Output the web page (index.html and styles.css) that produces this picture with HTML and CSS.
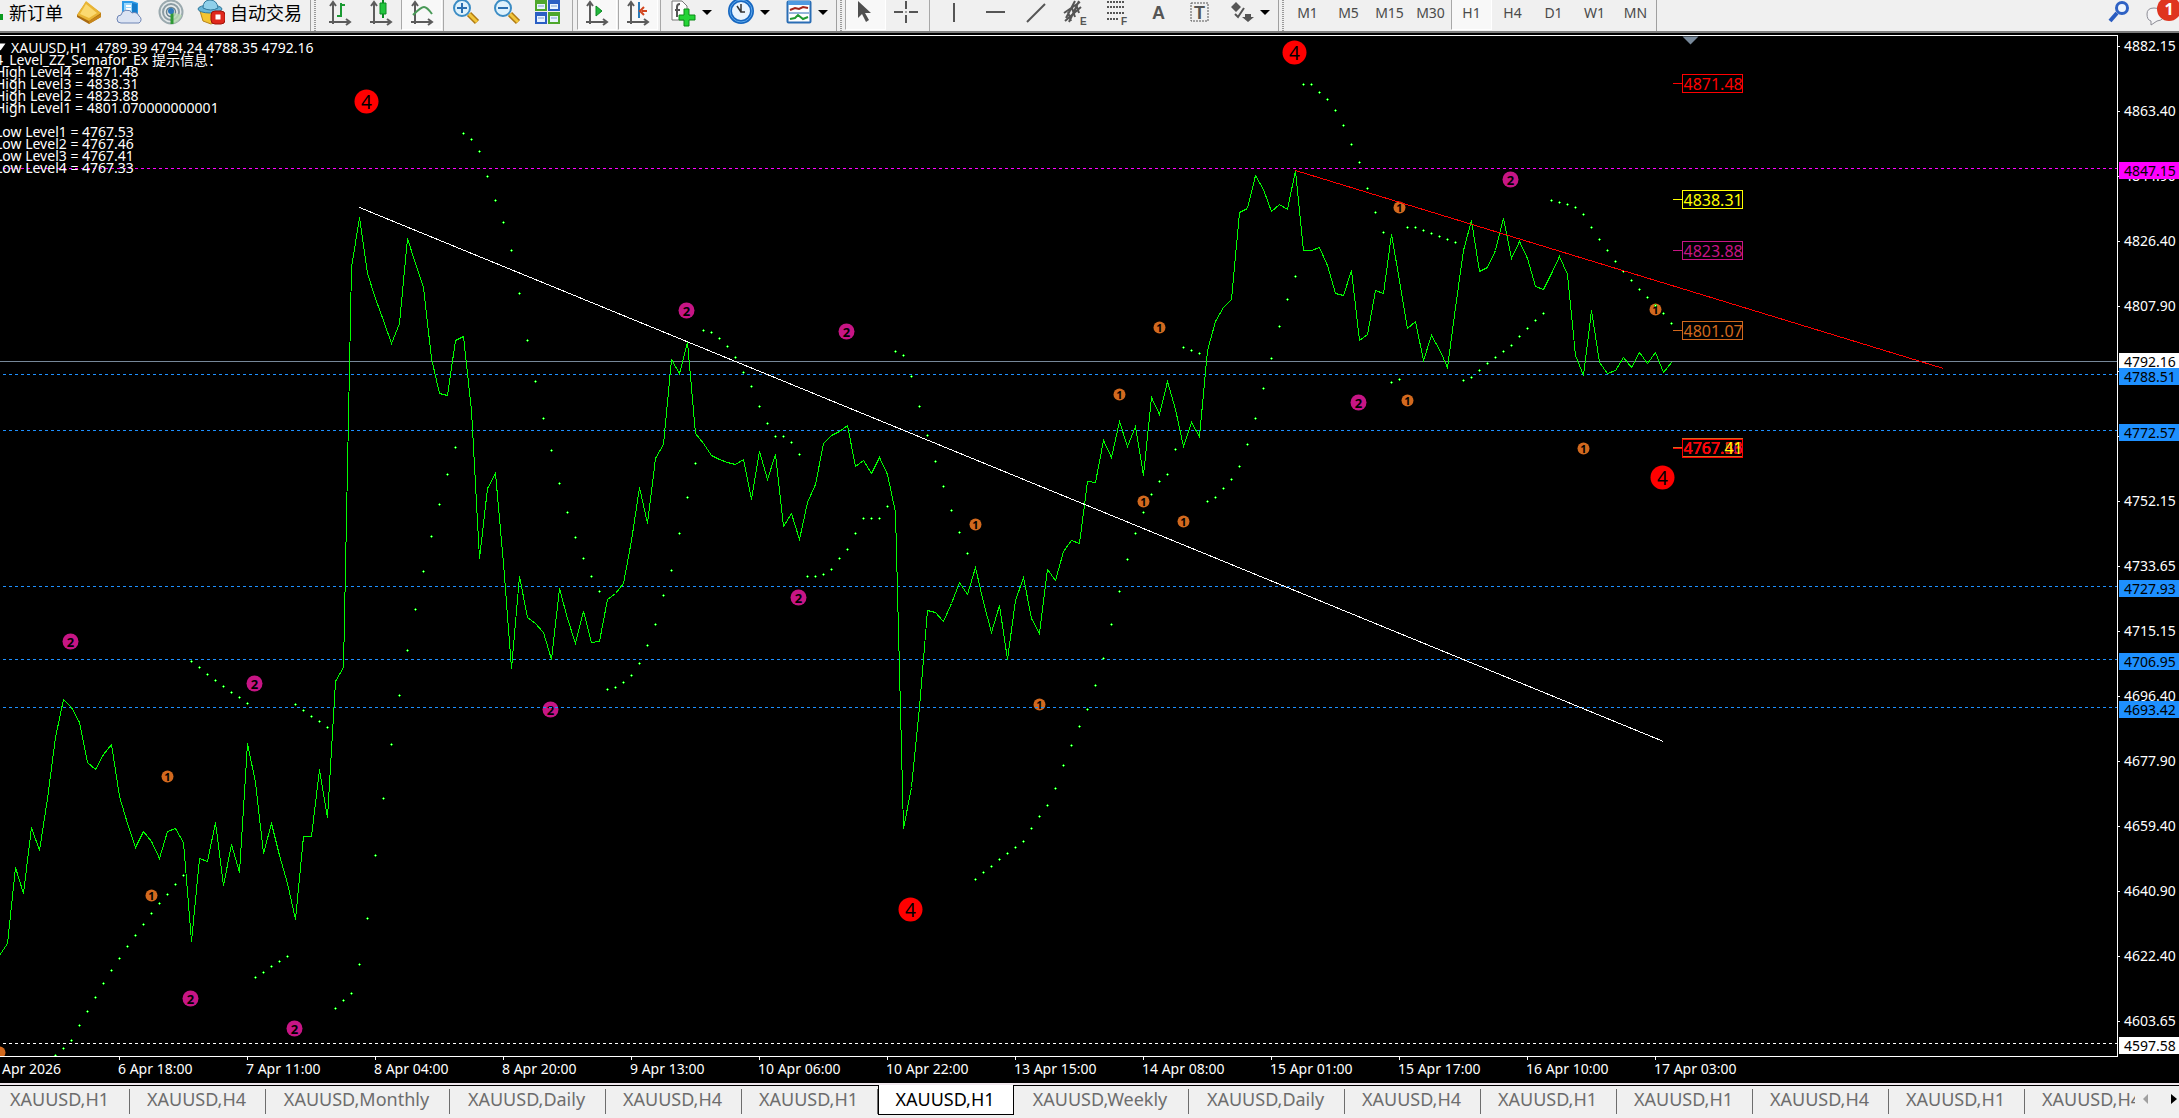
FILE: index.html
```html
<!DOCTYPE html>
<html lang="zh-CN">
<head>
<meta charset="utf-8">
<title>XAUUSD,H1</title>
<link rel="stylesheet" href="styles.css">
</head>
<body>
<header class="toolbar">
  <div class="group group-trade">
    <button class="tool tool-order" type="button">
      <svg class="order-plus" viewBox="0 0 5 28" aria-hidden="true"><path d="M0 14h3v6H0z" fill="#0a9a1e"/></svg>
      <span>新订单</span>
    </button>
    <button class="tool" type="button" aria-label="Market">
      <svg class="icon" viewBox="0 0 28 28"><path d="M2 15 11 2l15 11v4L14 24 2 17z" fill="#a96a10"/><path d="M2 15 11 1l15 12-12 8z" fill="#e9b535"/><path d="M5 14 11 4l11 9-8 5z" fill="#fbd970"/><path d="m14 21 12-7v3l-12 7z" fill="#c8871a"/></svg>
    </button>
    <button class="tool" type="button" aria-label="VPS">
      <svg class="icon" viewBox="0 0 28 28"><path d="M6 1h10l6 2v13H6z" fill="#2c9be8"/><path d="M8 3h8v12H8z" fill="#9ad7fb"/><path d="m16 3 5 1v11h-5z" fill="#157bc9"/><path d="M10 6h5M10 9h5" stroke="#fff" stroke-width="2"/><path d="M5 23a4 4 0 0 1 0-8 6 6 0 0 1 11-2 5 5 0 0 1 7 3 4 4 0 0 1 0 7z" fill="#dce4f3" stroke="#6d84b4"/></svg>
    </button>
    <button class="tool" type="button" aria-label="Signals">
      <svg class="icon" viewBox="0 0 28 28" fill="none"><circle cx="14" cy="12" r="11.500" fill="#e4e9ea" stroke="#9aa9ae" stroke-width="2"/><circle cx="14" cy="12" r="8" stroke="#8b9ca3" stroke-width="2"/><circle cx="14" cy="12" r="4.500" stroke="#6d838c" stroke-width="1.500"/><path d="M14 12v12a12 12 0 0 0 11-9z" fill="#b7d9b0" opacity=".8"/><path d="M15 12v12" stroke="#2f9a35" stroke-width="3"/><circle cx="14" cy="11" r="3" fill="#2f78b8"/></svg>
    </button>
    <button class="tool tool-auto" type="button">
      <svg class="icon" viewBox="0 0 28 28"><path d="M3 11h20l-3 10-6 3-8-3z" fill="#f4c531" stroke="#b8841a"/><ellipse cx="13" cy="9" rx="12" ry="4" fill="#68b6d9" stroke="#31799c"/><path d="M6 8q0-8 7-8t8 8q-7 4-15 0z" fill="#8fd0ea" stroke="#31799c"/><rect x="14" y="11" width="14" height="13" rx="4" fill="#e0281c" stroke="#a01208"/><rect x="18.500" y="14.500" width="5" height="5" fill="#fff"/></svg>
      <span>自动交易</span>
    </button>
  </div>
  <div class="group group-view">
    <button class="tool" type="button" aria-label="Bar chart">
      <svg class="icon" viewBox="0 0 28 28" fill="none"><path d="M7 3v21M3 22h20M4 6l3-4 3 4M20 19l4 3-4 3" stroke="#5c5c5c" stroke-width="2"/><path d="M15 3v14M11 16h4M15 5h4" stroke="#1a9a32" stroke-width="2"/></svg>
    </button>
    <button class="tool" type="button" aria-label="Candlesticks">
      <svg class="icon" viewBox="0 0 28 28" fill="none"><path d="M7 3v21M3 22h20M4 6l3-4 3 4M20 19l4 3-4 3" stroke="#5c5c5c" stroke-width="2"/><path d="M16 0v18" stroke="#0a8a22" stroke-width="2"/><path d="M13 3h6v11h-6z" fill="#22c63e" stroke="#0a8a22"/></svg>
    </button>
    <button class="tool is-on" type="button" aria-label="Line chart" aria-pressed="true">
      <svg class="icon" viewBox="0 0 28 28" fill="none"><path d="M7 3v21M3 22h20M4 6l3-4 3 4M20 19l4 3-4 3" stroke="#5c5c5c" stroke-width="2"/><path d="M5 15q8-8 11-8t8 7" stroke="#4a9a58" stroke-width="2"/></svg>
    </button>
    <span class="sep"></span>
    <button class="tool" type="button" aria-label="Zoom in">
      <svg class="icon" viewBox="0 0 28 28" fill="none"><path d="m17 14 8 8" stroke="#b07a12" stroke-width="6"/><path d="m17 14 8 8" stroke="#f2c63c" stroke-width="3"/><circle cx="10" cy="8" r="8" fill="#dff2fc" stroke="#3b8cc4" stroke-width="2"/><path d="M5 8h10M10 3v10" stroke="#2a6fb0" stroke-width="2"/></svg>
    </button>
    <button class="tool" type="button" aria-label="Zoom out">
      <svg class="icon" viewBox="0 0 28 28" fill="none"><path d="m17 14 8 8" stroke="#b07a12" stroke-width="6"/><path d="m17 14 8 8" stroke="#f2c63c" stroke-width="3"/><circle cx="10" cy="8" r="8" fill="#dff2fc" stroke="#3b8cc4" stroke-width="2"/><path d="M5 8h10" stroke="#2a6fb0" stroke-width="2"/></svg>
    </button>
    <button class="tool" type="button" aria-label="Tile windows">
      <svg class="icon" viewBox="0 0 28 28"><path d="M1 0h12v11H1zM14 12h12v12H14z" fill="#4ea72c"/><path d="M14 0h12v11H14zM1 12h12v12H1z" fill="#2b5fc4"/><path d="M3 4h8v5H3zM16 4h8v5h-8zM3 16h8v6H3zM16 16h8v6h-8z" fill="#e9f3ff"/><path d="M4 6h6M17 6h6M4 18h6M17 18h6" stroke="#7f9fce"/></svg>
    </button>
    <span class="sep sep-wide"></span>
    <button class="tool is-on tool-slim" type="button" aria-label="Auto scroll" aria-pressed="true">
      <svg class="icon" viewBox="0 0 28 28" fill="none"><path d="M7 3v21M3 22h20M4 6l3-4 3 4M20 19l4 3-4 3" stroke="#5c5c5c" stroke-width="2"/><path d="m13 6 6 5-6 5z" fill="#22b83c" stroke="#0a8a22"/></svg>
    </button>
    <button class="tool is-on tool-slim" type="button" aria-label="Chart shift" aria-pressed="true">
      <svg class="icon" viewBox="0 0 28 28" fill="none"><path d="M7 3v21M3 22h20M4 6l3-4 3 4M20 19l4 3-4 3" stroke="#5c5c5c" stroke-width="2"/><path d="M15 2v16" stroke="#2a7ab8" stroke-width="2"/><path d="M23 11h-5M20 7l-4 4 4 4" stroke="#d2451e" stroke-width="2"/></svg>
    </button>
    <span class="sep"></span>
    <button class="tool tool-menu" type="button" aria-label="Indicators">
      <svg class="icon" viewBox="0 0 28 28"><path d="M2 1h10l5 5v14H2z" fill="#fdfdfd" stroke="#777"/><path d="M7 17V7q0-3 3-3M5 10h5" fill="none" stroke="#555" stroke-width="2"/><path d="M14 9h5v6h6v5h-6v6h-5v-6H9v-5h5z" fill="#24d436" stroke="#0a8a16"/></svg>
      <i class="caret"></i>
    </button>
    <button class="tool tool-menu" type="button" aria-label="Periods">
      <svg class="icon" viewBox="0 0 28 28" fill="none"><circle cx="13" cy="11" r="11" fill="#e8f4fd" stroke="#1667c0" stroke-width="4"/><circle cx="13" cy="11" r="11" stroke="#5ea9ec"/><path d="M13 4v8h4M9 6l4 6" stroke="#333" stroke-width="1.500"/></svg>
      <i class="caret"></i>
    </button>
    <button class="tool tool-menu" type="button" aria-label="Templates">
      <svg class="icon" viewBox="0 0 28 28" fill="none"><rect x="1.500" y="1.500" width="23" height="21" rx="1" fill="#fff" stroke="#2a6db4" stroke-width="2"/><path d="M2 3h22" stroke="#4f9ae0" stroke-width="4"/><path d="m4 10 5-2 4 1 4-2 5 1" stroke="#a3241a" stroke-width="2"/><path d="M3 13h20" stroke="#2a6db4"/><path d="m4 19 5-1 3-3 5 4 5-2" stroke="#229a32" stroke-width="2"/></svg>
      <i class="caret"></i>
    </button>
  </div>
  <div class="group group-draw">
    <button class="tool is-on" type="button" aria-label="Cursor" aria-pressed="true">
      <svg class="icon" viewBox="0 0 28 28"><path d="M6 1v17l4-4 4 8 3-2-4-7h6z" fill="#4f4f4f"/></svg>
    </button>
    <button class="tool tool-slim" type="button" aria-label="Crosshair">
      <svg class="icon" viewBox="0 0 28 28" fill="none"><path d="M2 12h9M17 12h9M14 1v8M14 15v8" stroke="#555" stroke-width="2"/><path d="M13 12h2" stroke="#555"/></svg>
    </button>
    <span class="sep sep-wide"></span>
    <button class="tool" type="button" aria-label="Vertical line">
      <svg class="icon" viewBox="0 0 28 28"><path d="M13 3h2v19h-2z" fill="#555"/></svg>
    </button>
    <button class="tool" type="button" aria-label="Horizontal line">
      <svg class="icon" viewBox="0 0 28 28"><path d="M5 11h19v2H5z" fill="#555"/></svg>
    </button>
    <button class="tool" type="button" aria-label="Trendline">
      <svg class="icon" viewBox="0 0 28 28"><path d="M5 22 23 4" stroke="#555" stroke-width="2"/></svg>
    </button>
    <button class="tool" type="button" aria-label="Equidistant channel">
      <svg class="icon" viewBox="0 0 28 28"><path d="M1 13 17 2M2 21 18 7M5 12l3 9M9 8l3 9M13 4l3 9M16 1 6 22M12 1 3 18" fill="none" stroke="#555" stroke-width="2"/><text x="17" y="25" class="icon-letter">E</text></svg>
    </button>
    <button class="tool" type="button" aria-label="Fibonacci">
      <svg class="icon" viewBox="0 0 28 28"><path d="M3 2h18M3 7h18M3 13h18M3 19h11" stroke="#555" stroke-width="2" stroke-dasharray="2 1"/><text x="17" y="25" class="icon-letter">F</text></svg>
    </button>
    <button class="tool" type="button" aria-label="Text">
      <svg class="icon" viewBox="0 0 28 28"><text x="7" y="19" class="icon-glyph">A</text></svg>
    </button>
    <button class="tool" type="button" aria-label="Text label">
      <svg class="icon" viewBox="0 0 28 28"><rect x="5" y="3" width="17" height="18" fill="none" stroke="#555" stroke-dasharray="2 1"/><text x="8" y="19" class="icon-glyph">T</text></svg>
    </button>
    <button class="tool tool-menu" type="button" aria-label="Arrows">
      <svg class="icon" viewBox="0 0 28 28"><path d="m8 2 5 5-5 5-5-5zM20 22l-6-5h3v-3h6v3h3z" fill="#555"/><path d="m7 14 3 3 6-9" fill="none" stroke="#555" stroke-width="2"/></svg>
      <i class="caret"></i>
    </button>
  </div>
  <div class="group group-period">
    <button class="tool" type="button">M1</button>
    <button class="tool" type="button">M5</button>
    <button class="tool" type="button">M15</button>
    <button class="tool" type="button">M30</button>
    <button class="tool is-on" type="button" aria-pressed="true">H1</button>
    <button class="tool" type="button">H4</button>
    <button class="tool" type="button">D1</button>
    <button class="tool" type="button">W1</button>
    <button class="tool" type="button">MN</button>
  </div>
  <div class="group-end">
    <button class="tool" type="button" aria-label="Search">
      <svg class="icon" viewBox="0 0 28 28" fill="none"><path d="m11 13-7 8" stroke="#2a5cc0" stroke-width="4"/><circle cx="16" cy="8" r="5.500" fill="#eef5fd" stroke="#2f62c4" stroke-width="3"/></svg>
    </button>
    <button class="tool tool-chat" type="button" aria-label="Messages">
      <svg class="icon" viewBox="0 0 28 28"><path d="M4 14q0-6 7-6t9 6-6 7l-6 4v-4q-4-1-4-7z" fill="#f4f4f6" stroke="#8d8d96"/></svg>
      <span class="count">1</span>
    </button>
  </div>
</header>

<main class="chart">
  <section class="plot">
    <svg class="series" viewBox="-0.5 35.5 2117 1020" preserveAspectRatio="xMinYMin meet" role="img" aria-label="XAUUSD H1">
      <defs>
        <marker id="sar" markerUnits="userSpaceOnUse" markerWidth="3" markerHeight="3" refX="1.500" refY="1.500">
          <path d="M1 0h1v3H1zM0 1h3v1H0z" fill="#0f0"/><path d="M1 1h1v1H1z" fill="#b4ffb4"/>
        </marker>
      </defs>

      <g class="mark mark-4">
        <circle cx="366" cy="101" r="12"/><text x="366" y="108">4</text>
        <circle cx="1294" cy="52" r="12"/><text x="1294" y="59">4</text>
        <circle cx="910" cy="909" r="12"/><text x="910" y="916">4</text>
        <circle cx="1662" cy="477" r="12"/><text x="1662" y="484">4</text>
      </g>
      <g class="mark mark-2">
        <circle cx="70" cy="641" r="8"/><text x="70" y="646">2</text>
        <circle cx="254" cy="683" r="8"/><text x="254" y="688">2</text>
        <circle cx="190" cy="998" r="8"/><text x="190" y="1003">2</text>
        <circle cx="294" cy="1028" r="8"/><text x="294" y="1033">2</text>
        <circle cx="550" cy="709" r="8"/><text x="550" y="714">2</text>
        <circle cx="686" cy="310" r="8"/><text x="686" y="315">2</text>
        <circle cx="846" cy="331" r="8"/><text x="846" y="336">2</text>
        <circle cx="798" cy="597" r="8"/><text x="798" y="602">2</text>
        <circle cx="1510" cy="179" r="8"/><text x="1510" y="184">2</text>
        <circle cx="1358" cy="402" r="8"/><text x="1358" y="407">2</text>
      </g>
      <g class="mark mark-1">
        <circle cx="-1" cy="1052" r="6"/>
        <circle cx="167" cy="776" r="6"/><text x="167" y="780">1</text>
        <circle cx="151" cy="895" r="6"/><text x="151" y="899">1</text>
        <circle cx="975" cy="524" r="6"/><text x="975" y="528">1</text>
        <circle cx="1039" cy="704" r="6"/><text x="1039" y="708">1</text>
        <circle cx="1159" cy="327" r="6"/><text x="1159" y="331">1</text>
        <circle cx="1119" cy="394" r="6"/><text x="1119" y="398">1</text>
        <circle cx="1143" cy="501" r="6"/><text x="1143" y="505">1</text>
        <circle cx="1183" cy="521" r="6"/><text x="1183" y="525">1</text>
        <circle cx="1399" cy="207" r="6"/><text x="1399" y="211">1</text>
        <circle cx="1407" cy="400" r="6"/><text x="1407" y="404">1</text>
        <circle cx="1583" cy="448" r="6"/><text x="1583" y="452">1</text>
        <circle cx="1655" cy="309" r="6"/><text x="1655" y="313">1</text>
      </g>

      <path class="bid" d="M-1 361H2117"/>
      <path class="level level-top" d="M2.500 168H2117"/>
      <path class="level" d="M2.500 374H2117M2.500 430H2117M2.500 586H2117M2.500 659H2117M2.500 707H2117"/>
      <path class="level level-base" d="M2.500 1043H2117"/>

      <polyline class="price" points="-1,955 7,943 15,867 23,893 31,827 39,850 47,798 55,737 63,699 71,707 79,722 87,762 95,769 103,754 111,744 119,796 127,823 135,847 143,831 151,841 159,858 167,831 175,828 183,842 191,941 199,858 207,861 215,822 223,885 231,844 239,872 247,743 255,782 263,853 271,823 279,855 287,883 295,919 303,836 311,836 319,769 327,817 335,681 343,667 351,267 359,217 367,273 375,298 383,320 391,343 399,323 407,238 415,263 423,287 431,358 439,393 447,395 455,340 463,336 471,410 479,558 487,488 495,473 503,563 511,668 519,576 527,617 535,623 543,632 551,659 559,588 567,618 575,643 583,611 591,642 599,641 607,599 615,593 623,583 631,540 639,487 647,523 655,458 663,444 671,359 679,373 687,342 695,433 703,443 711,455 719,459 727,462 735,464 743,459 751,499 759,451 767,479 775,454 783,526 791,513 799,539 807,502 815,484 823,443 831,435 839,431 847,425 855,466 863,460 871,473 879,457 887,474 895,512 903,828 911,787 919,707 927,610 935,612 943,621 951,603 959,582 967,594 975,567 983,602 991,632 999,605 1007,659 1015,600 1023,577 1031,618 1039,633 1047,569 1055,580 1063,551 1071,540 1079,543 1087,481 1095,482 1103,440 1111,457 1119,421 1127,446 1135,426 1143,475 1151,397 1159,414 1167,381 1175,409 1183,446 1191,422 1199,436 1207,350 1215,321 1223,307 1231,299 1239,212 1247,208 1255,175 1263,189 1271,211 1279,204 1287,209 1295,170 1303,250 1311,250 1319,247 1327,265 1335,293 1343,295 1351,270 1359,340 1367,334 1375,290 1383,293 1391,234 1399,280 1407,328 1415,321 1423,360 1431,335 1439,349 1447,367 1455,307 1463,250 1471,220 1479,271 1487,267 1495,250 1503,218 1511,258 1519,241 1527,258 1535,286 1543,289 1551,273 1559,256 1567,274 1575,355 1583,375 1591,310 1599,362 1607,373 1615,370 1623,357 1631,367 1639,352 1647,363 1655,352 1663,372 1671,362"/>

      <g class="sar">
        <polyline points="55,1055 63,1048 71,1040 79,1025 87,1011 95,997 103,983 111,970 119,958 127,946 135,935 143,924 151,913 159,903 167,894 175,884 183,875"/>
        <polyline points="191,661 199,667 207,674 215,680 223,686 231,692 239,697 247,703"/>
        <polyline points="255,977 263,972 271,966 279,961 287,956"/>
        <polyline points="295,704 303,710 311,716 319,721 327,727"/>
        <polyline points="335,1008 343,1000 351,993 359,964 367,918 375,855 383,798 391,744 399,695 407,650 415,609 423,571 431,536 439,504 447,474 455,447"/>
        <polyline points="463,133 471,139 479,151 487,176 495,200 503,222 511,250 519,293 527,340 535,381 543,418 551,450 559,483 567,512 575,537 583,558 591,576 599,591"/>
        <polyline points="607,689 615,687 623,682 631,675 639,663 647,645 655,624 663,595 671,570 679,533 687,497 695,463"/>
        <polyline points="703,330 711,332 719,338 727,346 735,357 743,372 751,386 759,406 767,423 775,436 783,436 791,442 799,454"/>
        <polyline points="807,576 815,576 823,574 831,569 839,558 847,549 855,533 863,518 871,518 879,518 887,506"/>
        <polyline points="895,351 903,355 911,376 919,406 927,435 935,461 943,486 951,510 959,532 967,553"/>
        <polyline points="975,879 983,872 991,866 999,859 1007,853 1015,847 1023,841 1031,828 1039,816 1047,805 1055,788 1063,765 1071,745 1079,726 1087,709 1095,685 1103,658 1111,624 1119,591 1127,559 1135,533 1143,512 1151,494 1159,481 1167,474 1175,449"/>
        <polyline points="1183,347 1191,350 1199,353"/>
        <polyline points="1207,501 1215,497 1223,488 1231,479 1239,466 1247,444 1255,418 1263,388 1271,358 1279,326 1287,299 1295,276"/>
        <polyline points="1303,84 1311,84 1319,92 1327,99 1335,110 1343,125 1351,144 1359,162 1367,188 1375,212 1383,232"/>
        <polyline points="1391,382 1399,379"/>
        <polyline points="1407,227 1415,227 1423,230 1431,233 1439,236 1447,239 1455,242"/>
        <polyline points="1463,380 1471,377 1479,370 1487,363 1495,357 1503,351 1511,345 1519,336 1527,328 1535,320 1543,313"/>
        <polyline points="1551,200 1559,202 1567,204 1575,207 1583,214 1591,227 1599,239 1607,250 1615,261 1623,271 1631,280 1639,289 1647,297 1655,305 1663,313 1671,323"/>
      </g>

      <path class="trend" d="M359 207 1663 741"/>
      <path class="trend trend-red" d="M1295 170 1943 368"/>
      <path d="M1682 36h16l-8 8z" fill="#778899"/>
      <path d="M-5 43H5L0 50z" fill="#fff"/>

      <g class="tag tag-red"><path d="M1672 83h10M1682 74h60v18h-60z"/><text x="1683" y="89">4871.48</text></g>
      <g class="tag tag-yellow"><path d="M1672 199h10M1682 190h60v18h-60z"/><text x="1683" y="205">4838.31</text></g>
      <g class="tag tag-pink"><path d="M1672 250h10M1682 241h60v18h-60z"/><text x="1683" y="256">4823.88</text></g>
      <g class="tag tag-orange"><path d="M1672 330h10M1682 321h60v18h-60z"/><text x="1683" y="336">4801.07</text></g>
      <g class="tag tag-orange"><path d="M1672 447h10M1682 438h60v18h-60z"/><text x="1683" y="453">4767.53</text></g>
      <g class="tag tag-pink"><text x="1683" y="453">4767.46</text></g>
      <g class="tag tag-red"><path d="M1672 448h10M1682 439h60v18h-60z"/><text x="1683" y="453">4767.33</text></g>
      <g class="tag tag-yellow"><text x="1683" y="453"><tspan class="tag-red">4767.</tspan>41</text></g>
    </svg>
    <div class="notes">
      <p class="quote">XAUUSD,H1&nbsp; 4789.39 4794.24 4788.35 4792.16</p>
      <p>4_Level_ZZ_Semafor_Ex 提示信息：</p>
      <p>High Level4 = 4871.48</p>
      <p>High Level3 = 4838.31</p>
      <p>High Level2 = 4823.88</p>
      <p>High Level1 = 4801.070000000001</p>
      <p>&nbsp;</p>
      <p>Low Level1 = 4767.53</p>
      <p>Low Level2 = 4767.46</p>
      <p>Low Level3 = 4767.41</p>
      <p>Low Level4 = 4767.33</p>
    </div>
  </section>
  <aside class="prices">
    <ul class="scale">
      <li>4882.15</li><li>4863.40</li><li>4844.90</li><li>4826.40</li><li>4807.90</li><li>4789.40</li><li>4770.65</li><li>4752.15</li><li>4733.65</li><li>4715.15</li><li>4696.40</li><li>4677.90</li><li>4659.40</li><li>4640.90</li><li>4622.40</li><li>4603.65</li>
    </ul>
    <span class="badge badge-top" style="top:127px">4847.15</span>
    <span class="badge badge-white" style="top:318px">4792.16</span>
    <span class="badge" style="top:333px">4788.51</span>
    <span class="badge" style="top:389px">4772.57</span>
    <span class="badge" style="top:545px">4727.93</span>
    <span class="badge" style="top:618px">4706.95</span>
    <span class="badge" style="top:666px">4693.42</span>
    <span class="badge badge-white" style="top:1002px">4597.58</span>
  </aside>
  <ol class="times">
    <li>Apr 2026</li><li>6 Apr 18:00</li><li>7 Apr 11:00</li><li>8 Apr 04:00</li><li>8 Apr 20:00</li><li>9 Apr 13:00</li><li>10 Apr 06:00</li><li>10 Apr 22:00</li><li>13 Apr 15:00</li><li>14 Apr 08:00</li><li>15 Apr 01:00</li><li>15 Apr 17:00</li><li>16 Apr 10:00</li><li>17 Apr 03:00</li>
  </ol>
</main>

<nav class="tabs">
  <div class="tab-list">
    <a class="tab tab-first" href="#">XAUUSD,H1</a>
    <a class="tab" href="#">XAUUSD,H4</a>
    <a class="tab tab-monthly" href="#">XAUUSD,Monthly</a>
    <a class="tab tab-daily" href="#">XAUUSD,Daily</a>
    <a class="tab" href="#">XAUUSD,H4</a>
    <a class="tab" href="#">XAUUSD,H1</a>
    <a class="tab tab-current" href="#" aria-current="page">XAUUSD,H1</a>
    <a class="tab tab-weekly" href="#">XAUUSD,Weekly</a>
    <a class="tab tab-daily" href="#">XAUUSD,Daily</a>
    <a class="tab" href="#">XAUUSD,H4</a>
    <a class="tab" href="#">XAUUSD,H1</a>
    <a class="tab" href="#">XAUUSD,H1</a>
    <a class="tab" href="#">XAUUSD,H4</a>
    <a class="tab" href="#">XAUUSD,H1</a>
    <a class="tab" href="#">XAUUSD,H4</a>
  </div>
  <button class="scroll" type="button" aria-label="Previous tabs"><svg viewBox="0 0 6 10"><path d="M5 0v10L0 5z" fill="#a0a0a0"/></svg></button>
  <button class="scroll scroll-next" type="button" aria-label="Next tabs"><svg viewBox="0 0 6 10"><path d="M0 0v10l6-5z" fill="#000"/></svg></button>
</nav>
</body>
</html>
```
FILE: styles.css
```css
* { box-sizing: border-box; }

body {
  margin: 0;
  min-height: 100vh;
  display: flex;
  flex-direction: column;
  overflow: hidden;
  background: #000;
  color: #fff;
  font: 14px/20px "Noto Sans", "Noto Sans CJK SC", sans-serif;
}

p, ul, ol { margin: 0; padding: 0; list-style: none; }

button {
  margin: 0;
  padding: 0;
  border: 0;
  background: none;
  color: inherit;
  font: inherit;
}

/* toolbar */
.toolbar {
  display: flex;
  height: 33px;
  background: #f0f0f0;
  border-bottom: 2px solid #7c7c7c;
  color: #000;
  overflow: hidden;
}

.group {
  display: flex;
  flex: none;
  border-right: 1px solid #a0a0a0;
}

.group + .group::before {
  content: "";
  width: 2px;
  margin: 0 3px;
  background: repeating-linear-gradient(#999 0 1px, #f0f0f0 1px 2px);
}

.tool {
  flex: none;
  width: 41px;
  height: 30px;
  display: flex;
  justify-content: center;
  align-items: flex-start;
}

.icon { width: 28px; height: 28px; flex: none; }

.is-on {
  background: #f8f8f8;
  border-left: 1px solid #a8a8a8;
  border-right: 1px solid #fff;
  border-bottom: 1px solid #fff;
}

.tool-slim { width: 40px; }
.tool-slim.is-on { margin-right: 1px; }

.tool-order, .tool-auto {
  justify-content: flex-start;
  font: 18px/24px "Noto Sans CJK SC", sans-serif;
}
.tool-order { width: 68px; }
.tool-order span { margin-left: 4px; }
.order-plus { width: 5px; height: 28px; }
.tool-auto { width: 119px; padding-left: 6px; }
.tool-auto span { margin-left: 5px; }

.tool-menu { width: 58px; justify-content: flex-start; padding-left: 8px; }

.caret {
  margin: 10px 0 0 4px;
  border: 5px solid transparent;
  border-top-color: #000;
  border-bottom: 0;
}

.sep { width: 1px; margin: 0 1px; background: #a8a8a8; }
.sep-wide { margin: 0 4px; }
.group-draw .sep-wide { margin: 0 3px; }

.icon-letter { font: bold 10px "Liberation Sans", sans-serif; fill: #555; }
.icon-glyph { font: bold 18px "Liberation Sans", sans-serif; fill: #555; }

.group-period { color: #4a4a4a; }
.group-period .tool { font-size: 14px; line-height: 25px; }

.group-end { display: flex; margin-left: auto; }
.tool-chat { width: 36px; justify-content: flex-start; position: relative; }
.group-end .tool:first-child { width: 46px; }

.count {
  position: absolute;
  top: -3px;
  left: 14px;
  width: 24px;
  height: 24px;
  border-radius: 12px;
  background: #df3420;
  color: #fff;
  font: bold 16px/24px "Noto Sans", sans-serif;
  text-align: center;
}

/* chart */
.chart {
  flex: 1;
  display: grid;
  grid-template-columns: 1fr 61px;
  grid-template-rows: 1fr 26px;
  padding-top: 2px;
}

.plot {
  position: relative;
  border: 1px solid #fff;
  border-left: 0;
  overflow: hidden;
}

.series { display: block; width: 100%; height: auto; }
.series text { font-family: "Noto Sans", sans-serif; }

.price, .trend, .bid, .level, .tag path {
  fill: none;
  stroke-width: 1px;
  shape-rendering: crispEdges;
}
.price { stroke: #0f0; }
.trend { stroke: #fff; }
.trend-red { stroke: #f00; }
.bid { stroke: #778899; }
.level { stroke: #1e90ff; stroke-dasharray: 3 3; }
.level-top { stroke: #f0f; }
.level-base { stroke: #fff; }

.sar polyline {
  fill: none;
  stroke: none;
  marker: url(#sar);
}

.mark text { fill: #000; text-anchor: middle; }
.mark-4 { fill: #f00; }
.mark-4 text { font-size: 19px; }
.mark-2 { fill: #c71585; }
.mark-2 text { font-size: 13px; font-weight: bold; }
.mark-1 { fill: #d2691e; }
.mark-1 text { font-size: 11px; font-weight: bold; }

.tag text { font-size: 16px; }
.tag-red path { stroke: #f00; }
.tag-red text, .tag tspan { fill: #f00; }
.tag-yellow path { stroke: #ff0; }
.tag-yellow text { fill: #ff0; }
.tag-pink path { stroke: #c71585; }
.tag-pink text { fill: #c71585; }
.tag-orange path { stroke: #d2691e; }
.tag-orange text { fill: #d2691e; }

.notes {
  position: absolute;
  top: 5px;
  left: -5px;
  line-height: 12px;
  white-space: nowrap;
}
.notes .quote { margin-left: 16px; line-height: 13px; }

.prices { position: relative; }

.scale {
  height: 100%;
  display: flex;
  flex-direction: column;
  justify-content: space-between;
  padding: 1px 0 26px;
}
.scale li { display: flex; align-items: center; height: 20px; }
.scale li::before {
  content: "";
  width: 2px;
  height: 1px;
  margin-right: 4px;
  background: #fff;
}

.badge {
  position: absolute;
  left: 1px;
  right: 0;
  height: 17px;
  padding-left: 5px;
  background: #1e90ff;
  color: #000;
  line-height: 18px;
}
.badge-top { background: #f0f; }
.badge-white { background: #fff; }

.times {
  grid-column: 1 / -1;
  display: flex;
  overflow: hidden;
  white-space: nowrap;
}
.times li { flex: none; width: 128px; line-height: 24px; }
.times li::before {
  content: "";
  display: block;
  width: 1px;
  height: 3px;
  margin: 0 0 -3px 1px;
  background: #fff;
}
.times li:first-child { width: 118px; padding-left: 2px; }
.times li:first-child::before { background: none; }

/* chart tabs */
.tabs {
  display: flex;
  height: 35px;
  border-top: 2px solid #f0e8ee;
  background: #f0f0f0;
  box-shadow: inset 0 1px #000;
  color: #6d6d6d;
  font-size: 18px;
}

.tab-list { flex: 1; display: flex; overflow: hidden; }

.tab {
  flex: none;
  width: 136px;
  height: 25px;
  margin-top: 4px;
  padding-right: 2px;
  border-right: 1px solid #6d6d6d;
  color: inherit;
  line-height: 21px;
  text-align: center;
  text-decoration: none;
}
.tab-first { width: 130px; padding-right: 10px; }
.tab-monthly { width: 184px; }
.tab-daily { width: 156px; }
.tab-weekly { width: 175px; }
.tab-current {
  height: 30px;
  margin-top: 0;
  padding-top: 4px;
  border: 1px solid #000;
  border-width: 0 1px 1px;
  background: #fff;
  color: #000;
}

.scroll { display: flex; align-items: center; padding: 0 0 6px 8px; width: 22px; }
.scroll svg { width: 6px; height: 10px; }
.scroll-next { padding-left: 14px; }
```
